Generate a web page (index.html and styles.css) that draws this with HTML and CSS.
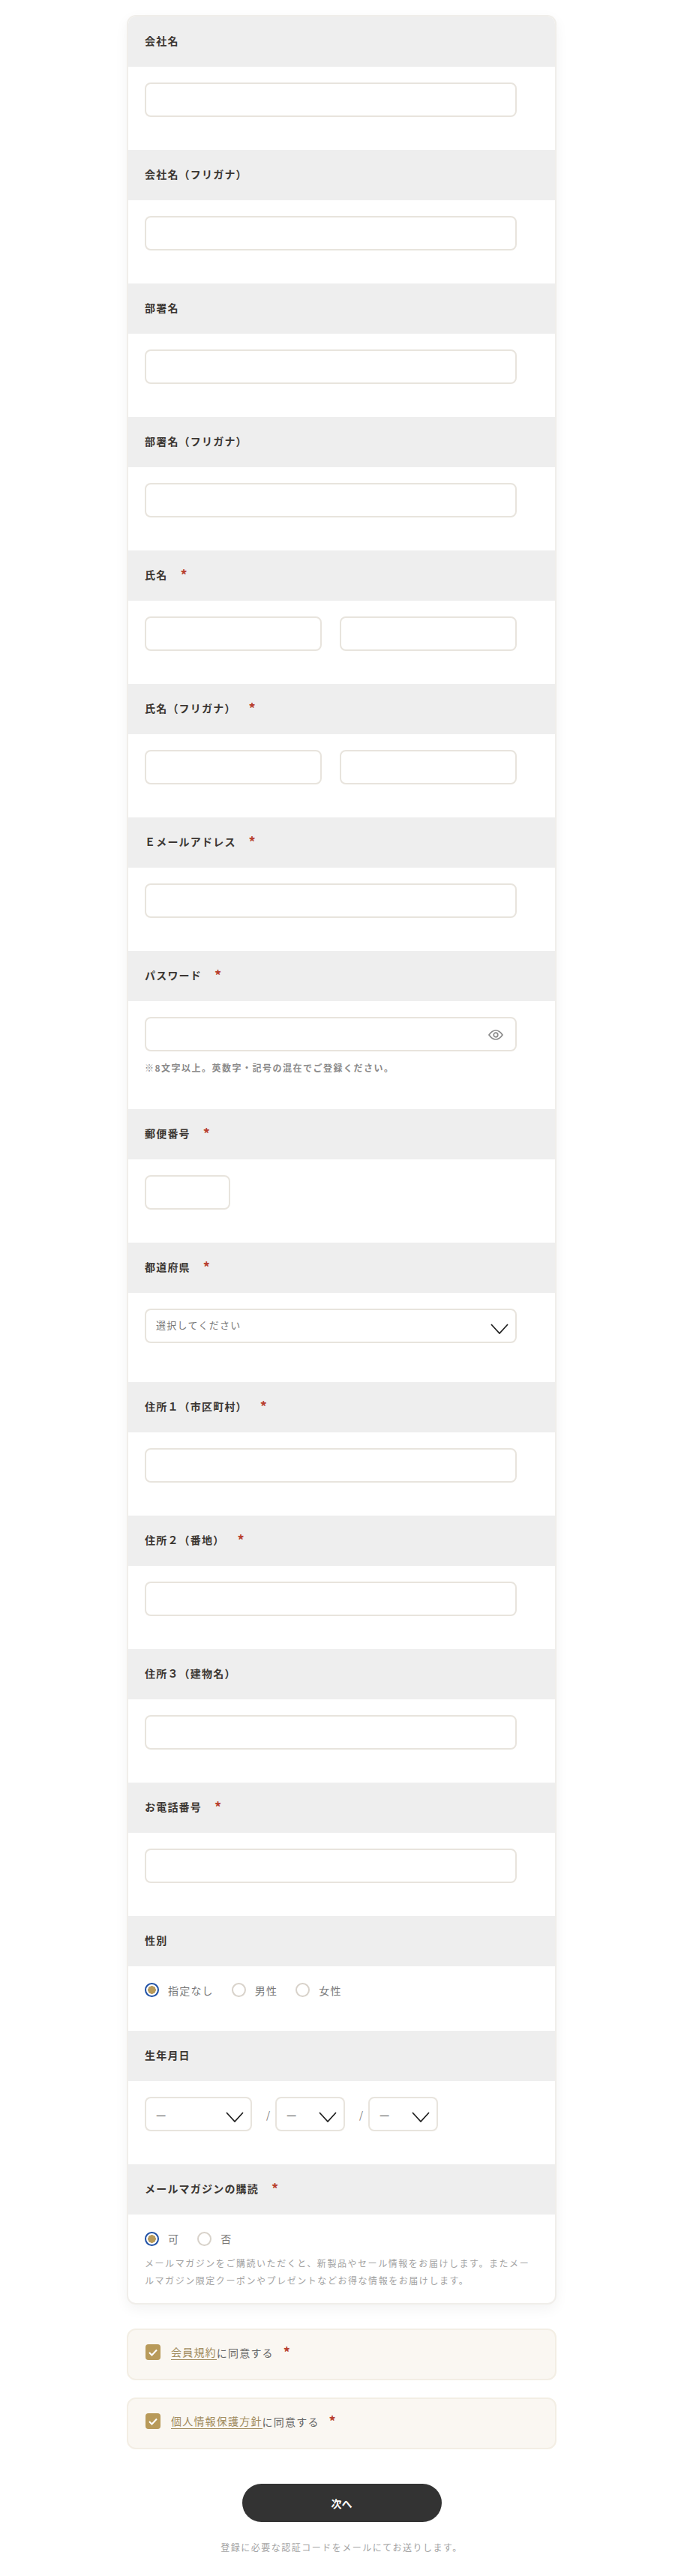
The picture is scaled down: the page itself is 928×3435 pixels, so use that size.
FILE: index.html
```html
<!DOCTYPE html>
<html lang="ja">
<head>
  <meta charset="UTF-8">
  <title>会員登録</title>
  <link rel="stylesheet" href="styles.css">
</head>
<body>
  <main class="page">
    <form class="signup">
      <div class="card">
        <h2 class="label">会社名</h2>
        <div class="field"><input type="text" class="text-input"></div>

        <h2 class="label">会社名（フリガナ）</h2>
        <div class="field"><input type="text" class="text-input"></div>

        <h2 class="label">部署名</h2>
        <div class="field"><input type="text" class="text-input"></div>

        <h2 class="label">部署名（フリガナ）</h2>
        <div class="field"><input type="text" class="text-input"></div>

        <h2 class="label">氏名<span class="req">*</span></h2>
        <div class="field pair">
          <input type="text" class="text-input">
          <input type="text" class="text-input">
        </div>

        <h2 class="label">氏名（フリガナ）<span class="req">*</span></h2>
        <div class="field pair">
          <input type="text" class="text-input">
          <input type="text" class="text-input">
        </div>

        <h2 class="label">Ｅメールアドレス<span class="req">*</span></h2>
        <div class="field"><input type="text" class="text-input"></div>

        <h2 class="label">パスワード<span class="req">*</span></h2>
        <div class="field">
          <div class="password">
            <input type="password" class="password-input">
            <svg class="eye" viewBox="0 0 20 14" width="20" height="14" fill="none" stroke="#8a8a8a" stroke-width="1.7">
              <path d="M1 7C4 2.6 7 1 10 1s6 1.600 9 6c-3 4.400-6 6-9 6s-6-1.600-9-6z"/>
              <circle cx="10" cy="7" r="2.800"/>
            </svg>
          </div>
          <p class="help">※8文字以上。英数字・記号の混在でご登録ください。</p>
        </div>

        <h2 class="label">郵便番号<span class="req">*</span></h2>
        <div class="field"><input type="text" class="text-input zip"></div>

        <h2 class="label">都道府県<span class="req">*</span></h2>
        <div class="field field-select">
          <div class="select">
            <span class="select-text">選択してください</span>
            <svg class="chevron" viewBox="0 0 24 14" width="24" height="14" fill="none" stroke="#1c1c1c" stroke-width="1.700"><path d="M1 1l11 12L23 1"/></svg>
          </div>
        </div>

        <h2 class="label">住所１（市区町村）<span class="req">*</span></h2>
        <div class="field"><input type="text" class="text-input"></div>

        <h2 class="label">住所２（番地）<span class="req">*</span></h2>
        <div class="field"><input type="text" class="text-input"></div>

        <h2 class="label">住所３（建物名）</h2>
        <div class="field"><input type="text" class="text-input"></div>

        <h2 class="label">お電話番号<span class="req">*</span></h2>
        <div class="field"><input type="text" class="text-input"></div>

        <h2 class="label">性別</h2>
        <div class="field">
          <div class="radios">
            <label class="radio"><input type="radio" name="gender" checked>指定なし</label>
            <label class="radio"><input type="radio" name="gender">男性</label>
            <label class="radio"><input type="radio" name="gender">女性</label>
          </div>
        </div>

        <h2 class="label">生年月日</h2>
        <div class="field date">
          <div class="select year">
            <span class="dash">—</span>
            <svg class="chevron" viewBox="0 0 24 14" width="24" height="14" fill="none" stroke="#1c1c1c" stroke-width="1.700"><path d="M1 1l11 12L23 1"/></svg>
          </div>
          <span class="slash">/</span>
          <div class="select day">
            <span class="dash">—</span>
            <svg class="chevron" viewBox="0 0 24 14" width="24" height="14" fill="none" stroke="#1c1c1c" stroke-width="1.700"><path d="M1 1l11 12L23 1"/></svg>
          </div>
          <span class="slash">/</span>
          <div class="select day">
            <span class="dash">—</span>
            <svg class="chevron" viewBox="0 0 24 14" width="24" height="14" fill="none" stroke="#1c1c1c" stroke-width="1.700"><path d="M1 1l11 12L23 1"/></svg>
          </div>
        </div>

        <h2 class="label">メールマガジンの購読<span class="req">*</span></h2>
        <div class="field field-last">
          <div class="radios radios-mail">
            <label class="radio"><input type="radio" name="mail" checked>可</label>
            <label class="radio"><input type="radio" name="mail">否</label>
          </div>
          <p class="note">メールマガジンをご購読いただくと、新製品やセール情報をお届けします。またメールマガジン限定クーポンやプレゼントなどお得な情報をお届けします。</p>
        </div>
      </div>

      <div class="agree">
        <span class="check"><svg viewBox="0 0 12 10" width="12" height="10" fill="none" stroke="#fff" stroke-width="2"><path d="M1 5l3.500 3.500L11 1.500"/></svg></span>
        <span class="agree-text"><a href="#" class="agree-link">会員規約</a>に同意する<span class="req">*</span></span>
      </div>
      <div class="agree">
        <span class="check"><svg viewBox="0 0 12 10" width="12" height="10" fill="none" stroke="#fff" stroke-width="2"><path d="M1 5l3.500 3.500L11 1.500"/></svg></span>
        <span class="agree-text"><a href="#" class="agree-link">個人情報保護方針</a>に同意する<span class="req">*</span></span>
      </div>

      <button type="button" class="next">次へ</button>
      <p class="foot">登録に必要な認証コードをメールにてお送りします。</p>
    </form>
  </main>
</body>
</html>
```

FILE: styles.css
```css
html {
  background: #fff;
}

body {
  margin: 0;
  font-family: "Noto Sans CJK JP", "Noto Sans", sans-serif;
  color: #3b3632;
}

.page {
  width: 911px;
}

.signup {
  width: 573px;
  margin: 0 auto;
  padding-top: 20px;
}

.card {
  border: 2px solid #f0eeea;
  border-radius: 12px;
  background: #fff;
  overflow: hidden;
  box-shadow: 0 6px 18px rgba(0, 0, 0, 0.05);
}

.label {
  display: flex;
  align-items: center;
  box-sizing: border-box;
  height: 67px;
  margin: 0;
  padding: 0 0 3px 22px;
  background: #eee;
  font-size: 14px;
  font-weight: 700;
  letter-spacing: 1.2px;
}

.req {
  margin-left: 17px;
  margin-top: -1px;
  color: #b8402f;
  font-size: 18px;
  font-weight: 700;
  line-height: 1;
}

.field {
  padding: 21px 0 44px 22px;
}

.field-select {
  padding-bottom: 52px;
}

.field-last {
  padding-bottom: 19px;
}

.text-input,
.password,
.select {
  box-sizing: border-box;
  display: block;
  width: 496px;
  height: 46px;
  margin: 0;
  border: 2px solid #e8e4dd;
  border-radius: 8px;
  background: #fff;
}

.zip {
  width: 114px;
}

.pair {
  display: flex;
  gap: 24px;
}

.pair .text-input {
  width: 236px;
}

.password {
  display: flex;
  align-items: center;
  justify-content: flex-end;
  padding-right: 16px;
}

.password-input {
  flex: 1;
  min-width: 0;
  border: 0;
  background: none;
}

.eye {
  flex: none;
  margin-top: 1px;
}

.help {
  margin: 10px 0 0;
  color: #8a8a8a;
  font-size: 12px;
  font-weight: 700;
  line-height: 23px;
  letter-spacing: 1.500px;
}

.select {
  display: flex;
  align-items: center;
  justify-content: space-between;
  padding: 0 9px 0 13px;
}

.select-text {
  margin-top: -4px;
  color: #777;
  font-size: 13px;
  letter-spacing: 1.300px;
}

.chevron {
  flex: none;
  margin-top: 8px;
}

.date {
  display: flex;
  align-items: center;
}

.year {
  width: 143px;
}

.day {
  width: 93px;
}

.slash {
  width: 5px;
  margin: 0 7px 0 19px;
  color: #777;
  font-size: 13px;
}

.dash {
  color: #222;
  font-size: 15px;
  font-weight: 300;
  line-height: 1;
}

.radios {
  display: flex;
  gap: 24px;
  height: 21px;
}

.radios-mail {
  height: 22px;
}

.radio {
  display: flex;
  align-items: center;
  gap: 12px;
  color: #777;
  font-size: 14px;
  letter-spacing: 1.200px;
}

.radio input {
  appearance: none;
  box-sizing: border-box;
  flex: none;
  width: 19px;
  height: 19px;
  margin: 0;
  border: 2px solid #d8d2ca;
  border-radius: 50%;
  background: #fff;
}

.radio input:checked {
  border-color: #1d4fa5;
  background: radial-gradient(circle, #b89a5a 0 5px, #fff 5.500px);
}

.note {
  max-width: 525px;
  margin: 10px 0 0;
  color: #a3a3a3;
  font-size: 12px;
  line-height: 23px;
  letter-spacing: 1.550px;
}

.agree {
  display: flex;
  align-items: center;
  box-sizing: border-box;
  height: 69px;
  margin-top: 23px;
  padding: 0 22px 6px 23px;
  border: 2px solid #f3eee4;
  border-radius: 12px;
  background: #faf7f2;
}

.card + .agree {
  margin-top: 32px;
}

.check {
  display: flex;
  align-items: center;
  justify-content: center;
  flex: none;
  width: 20px;
  height: 21px;
  margin-right: 14px;
  border-radius: 4px;
  background: #b89a5a;
}

.agree-text {
  display: flex;
  align-items: center;
  color: #666;
  font-size: 14px;
  letter-spacing: 1.200px;
}

.agree-text .req {
  margin-left: 13px;
}

.agree-link {
  color: #a08a5c;
  text-decoration: none;
  border-bottom: 1px solid #a08a5c;
}

.next {
  display: block;
  width: 266px;
  height: 51px;
  margin: 46px auto 0;
  padding: 0;
  border: 0;
  border-radius: 26px;
  background: #333;
  color: #fff;
  font-family: inherit;
  font-size: 14px;
  font-weight: 700;
}

.foot {
  margin: 23px 0 0;
  color: #a3a3a3;
  font-size: 12px;
  line-height: 22px;
  letter-spacing: 1.500px;
  text-align: center;
}
```
